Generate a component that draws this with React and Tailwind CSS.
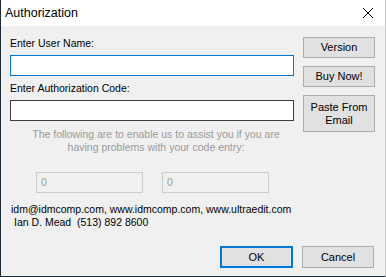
export default function App() {
  return (
    <div
      className="w-[386px] h-[277px] flex flex-col bg-[#f0f0f0] border-l border-b border-[#1e2a38] border-r border-r-[#c8c8c8] overflow-hidden text-[10.5px] leading-[13px] text-black"
      style={{ fontFamily: '"Liberation Sans", Arial, sans-serif' }}
    >
      {/* title bar */}
      <div className="h-[26px] bg-white flex items-center justify-between pl-[4px] pr-[11px] shrink-0">
        <span className="text-[12.5px]">Authorization</span>
        <svg width="12" height="12" viewBox="0 0 12 12">
          <path d="M1 1L11 11M11 1L1 11" stroke="#000" strokeWidth="1" />
        </svg>
      </div>

      <div className="flex flex-col pl-[9px]">
        <div className="flex">
          {/* left column */}
          <div className="w-[290px] flex flex-col">
            <div className="mt-[11px] h-[13px]">Enter User Name:</div>
            <div className="mt-[5px] w-[284px] h-[21px] bg-white border border-[#0078d7]" />
            <div className="mt-[6px] h-[13px]">Enter Authorization Code:</div>
            <div className="mt-[5px] w-[284px] h-[21px] bg-white border border-[#3c3c3c]" />
            <div className="mt-[7px] w-[292px] text-center text-[#9a9a9a]">
              The following are to enable us to assist you if you are
              <br />
              having problems with your code entry:
            </div>
          </div>
          {/* right buttons */}
          <div className="ml-[3px] w-[72px] flex flex-col mt-[11px] gap-[8px] text-[11px]">
            <button className="h-[21px] bg-[#e1e1e1] border border-[#adadad]">Version</button>
            <button className="h-[21px] bg-[#e1e1e1] border border-[#adadad]">Buy Now!</button>
            <button className="h-[37px] bg-[#e1e1e1] border border-[#adadad] leading-[13px] pt-[1px]">
              Paste From
              <br />
              Email
            </button>
          </div>
        </div>

        {/* disabled fields */}
        <div className="flex mt-[18px] ml-[26px] gap-[19px]">
          <div className="w-[107px] h-[21px] border border-[#cccccc] flex items-center pl-[4px] text-[#a39a8c]">0</div>
          <div className="w-[107px] h-[21px] border border-[#cccccc] flex items-center pl-[4px] text-[#a39a8c]">0</div>
        </div>

        <div className="mt-[10px] ml-px">
          idm@idmcomp.com, www.idmcomp.com, www.ultraedit.com
        </div>
        <div className="ml-[4px] whitespace-pre">{'Ian D. Mead  (513) 892 8600'}</div>

        <div className="flex justify-end mt-[17px] mr-[11px] gap-[9px] text-[11px]">
          <button className="w-[73px] h-[22px] bg-[#e1e1e1] border-2 border-[#0078d7]">OK</button>
          <button className="w-[72px] h-[22px] bg-[#e1e1e1] border border-[#adadad]">Cancel</button>
        </div>
      </div>
    </div>
  );
}
